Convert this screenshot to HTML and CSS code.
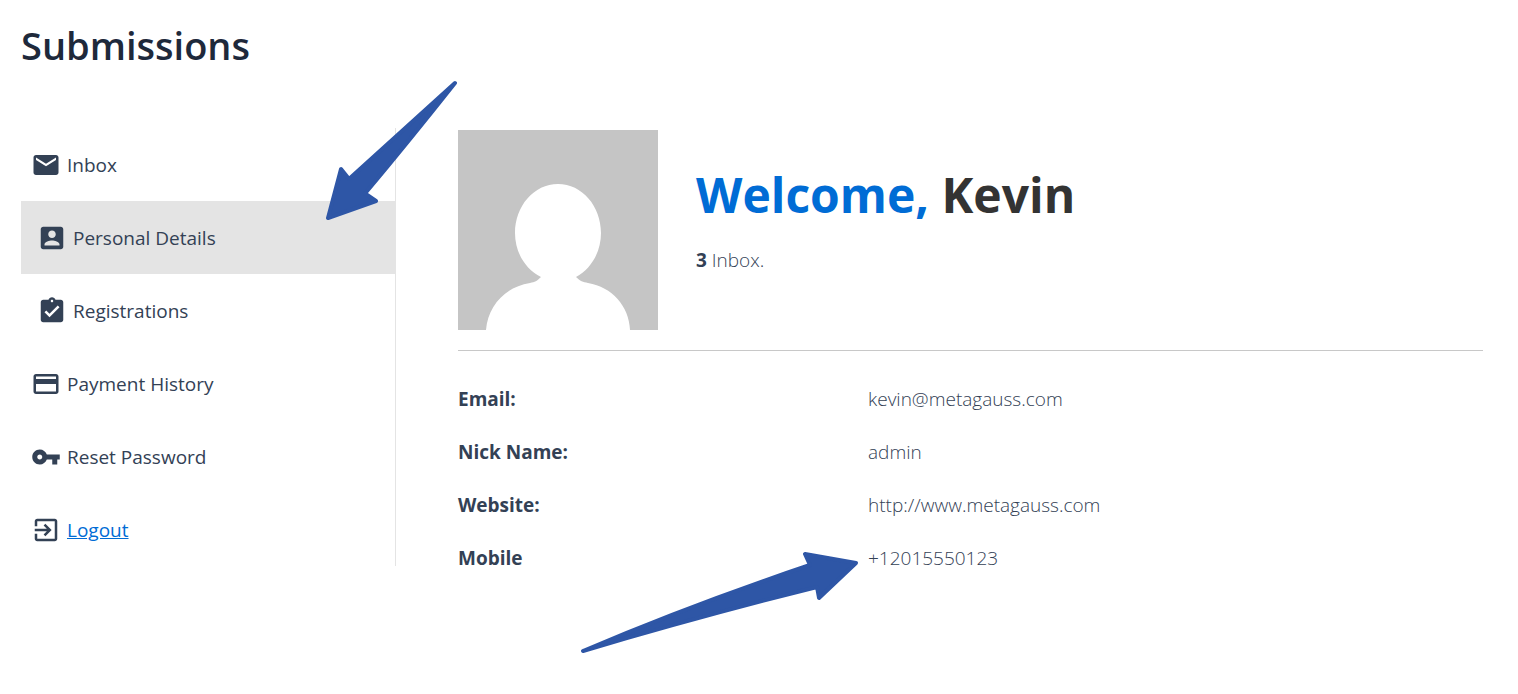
FILE: index.html
```html
<!DOCTYPE html>
<html lang="en">
<head>
    <meta charset="UTF-8">
    <meta name="viewport" content="width=device-width, initial-scale=1.0">
    <title>Submissions</title>
    <link rel="stylesheet" href="styles.css">
</head>
<body>
    <header>
        <h1>Submissions</h1>
    </header>
    <div class="layout">
        <nav class="sidebar">
            <button type="button" class="tab">
                <svg class="icon" viewBox="0 0 24 24"><path d="M20 4H4c-1.1 0-1.99.9-1.99 2L2 18c0 1.1.9 2 2 2h16c1.1 0 2-.9 2-2V6c0-1.1-.9-2-2-2zm0 4l-8 5-8-5V6l8 5 8-5v2z"/></svg>
                <span>Inbox</span>
            </button>
            <button type="button" class="tab indent active">
                <svg class="icon" viewBox="0 0 24 24"><path d="M3 5v14c0 1.1.89 2 2 2h14c1.1 0 2-.9 2-2V5c0-1.1-.9-2-2-2H5c-1.11 0-2 .9-2 2zm12 4c0 1.66-1.34 3-3 3s-3-1.34-3-3 1.34-3 3-3 3 1.34 3 3zm-9 8c0-2 4-3.1 6-3.1s6 1.1 6 3.1v1H6v-1z"/></svg>
                <span>Personal Details</span>
            </button>
            <button type="button" class="tab indent">
                <svg class="icon" viewBox="0 0 24 24"><path d="M19 3h-4.18C14.4 1.84 13.3 1 12 1c-1.3 0-2.4.84-2.82 2H5c-1.1 0-2 .9-2 2v14c0 1.1.9 2 2 2h14c1.1 0 2-.9 2-2V5c0-1.1-.9-2-2-2zm-7 0c.55 0 1 .45 1 1s-.45 1-1 1-1-.45-1-1 .45-1 1-1zm-2 14l-4-4 1.41-1.41L10 14.17l6.59-6.59L18 9l-8 8z"/></svg>
                <span>Registrations</span>
            </button>
            <button type="button" class="tab">
                <svg class="icon" viewBox="0 0 24 24"><path d="M20 4H4c-1.11 0-1.99.89-1.99 2L2 18c0 1.11.89 2 2 2h16c1.11 0 2-.89 2-2V6c0-1.11-.89-2-2-2zm0 14H4v-6h16v6zm0-10H4V6h16v2z"/></svg>
                <span>Payment History</span>
            </button>
            <button type="button" class="tab">
                <svg class="icon" viewBox="0 0 24 24"><path d="M12.65 10C11.83 7.67 9.61 6 7 6c-3.31 0-6 2.69-6 6s2.69 6 6 6c2.61 0 4.83-1.67 5.65-4H17v4h4v-4h2v-4H12.65zM7 14c-1.1 0-2-.9-2-2s.9-2 2-2 2 .9 2 2-.9 2-2 2z"/></svg>
                <span>Reset Password</span>
            </button>
            <div class="tab">
                <svg class="icon" viewBox="0 0 24 24"><path d="M10.09 15.59L11.5 17l5-5-5-5-1.41 1.41L12.67 11H3v2h9.67l-2.58 2.59zM19 3H5c-1.11 0-2 .9-2 2v4h2V5h14v14H5v-4H3v4c0 1.1.89 2 2 2h14c1.1 0 2-.9 2-2V5c0-1.1-.9-2-2-2z"/></svg>
                <a href="#">Logout</a>
            </div>
            <svg class="arrow arrow-tab" viewBox="0 0 132 142"><path d="M130 3Q66 61 24 99L16 89 3 138 51 121 40 113.500Q80 66 130 3Z"/></svg>
        </nav>
        <main>
            <section class="profile">
                <svg class="avatar" viewBox="0 0 200 200">
                    <rect width="200" height="200" fill="#c5c5c5"/>
                    <path fill="#fff" d="M100 54C124 54 143 76 143 103C143 122 133 139 118 147C122 151 125 152 130 153C154 157 171 176 172 200H28C30 176 47 157 72 153C77 152 79 151 83 147C67 139 57 122 57 103C57 76 76 54 100 54Z"/>
                </svg>
                <div class="welcome">
                    <h2><span>Welcome,</span> Kevin</h2>
                    <p><strong>3</strong> Inbox.</p>
                </div>
            </section>
            <table class="details">
                <tbody>
                    <tr>
                        <th scope="row">Email:</th>
                        <td>kevin@metagauss.com</td>
                    </tr>
                    <tr>
                        <th scope="row">Nick Name:</th>
                        <td>admin</td>
                    </tr>
                    <tr>
                        <th scope="row">Website:</th>
                        <td>http://www.metagauss.com</td>
                    </tr>
                    <tr>
                        <th scope="row">Mobile</th>
                        <td>
                            +12015550123
                            <svg class="arrow arrow-mobile" viewBox="0 0 277 102"><path d="M2 99Q110 53 229 13L224 2 275 11 238 46 236 35Q120 64 2 99Z"/></svg>
                        </td>
                    </tr>
                </tbody>
            </table>
        </main>
    </div>
</body>
</html>
```
FILE: styles.css
```css
* {
    box-sizing: border-box;
}
body {
    min-height: 100vh;
    margin: 0;
    padding: 16px 35px 32px 21px;
    background-color: #fff;
    color: #334155;
    font-family: "Segoe UI", "Open Sans", "Noto Sans", sans-serif;
    font-size: 19px;
}
h1 {
    margin: 0 0 54px;
    color: #1e293b;
    font-size: 38px;
    font-weight: 600;
    line-height: 58px;
}
.layout {
    display: grid;
    grid-template-columns: 15fr 41fr;
    column-gap: 62px;
    align-items: start;
}
.sidebar {
    position: relative;
    border-right: 1px solid #e4e4e4;
}
.tab {
    display: flex;
    align-items: center;
    gap: 6px;
    width: 100%;
    height: 73px;
    padding: 0 10px;
    border: none;
    background: none;
    color: inherit;
    font: inherit;
    text-align: left;
}
button.tab {
    cursor: pointer;
}
.tab.indent {
    padding-left: 16px;
}
.tab.active {
    background-color: #e4e4e4;
}
.tab a {
    color: #006cd5;
}
.icon {
    width: 30px;
    height: 30px;
    fill: #334155;
}
main {
    padding-top: 2px;
}
.profile {
    display: flex;
    align-items: center;
    gap: 38px;
    padding-bottom: 20px;
    border-bottom: 1px solid #c8c8c8;
}
.avatar {
    width: 200px;
    height: 200px;
}
.welcome {
    padding-bottom: 20px;
}
h2 {
    margin: 0 0 24px;
    color: #333;
    font-size: 48px;
    font-weight: 700;
    line-height: 56px;
}
h2 span {
    color: #006cd5;
}
.profile p {
    margin: 0;
    font-weight: 300;
    line-height: 26px;
}
.profile strong {
    font-weight: 700;
}
.details {
    width: 100%;
    margin-top: 21px;
    border-collapse: collapse;
    table-layout: fixed;
}
.details th, .details td {
    height: 53px;
    padding: 0;
    text-align: left;
}
.details th {
    width: 40%;
    font-weight: 700;
}
.details td {
    position: relative;
    font-weight: 300;
}
/* Pointer arrows drawn over the page */
.arrow {
    position: absolute;
    fill: #2e56a6;
    stroke: #2e56a6;
    stroke-width: 4;
    stroke-linejoin: round;
    pointer-events: none;
}
.arrow-tab {
    top: -48px;
    right: -62px;
    width: 132px;
    height: 142px;
}
.arrow-mobile {
    top: 21px;
    right: 100%;
    width: 277px;
    height: 102px;
    margin-right: 10px;
}
```
